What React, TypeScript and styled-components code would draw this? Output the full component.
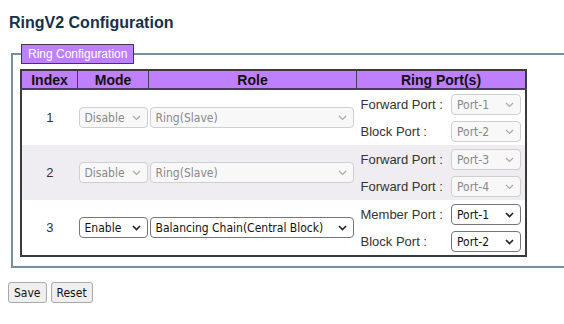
import styled, { createGlobalStyle } from "styled-components";

const GlobalStyle = createGlobalStyle`
  html {
    overflow: hidden;
  }
  body {
    margin: 0;
    background: #fff;
    font-family: "Liberation Sans", Arial, sans-serif;
    color: #222;
  }
`;

const Page = styled.div`
  padding: 13px 0 0 0;
`;

const Title = styled.h1`
  margin: 0 0 11px 9px;
  font-size: 16px;
  font-weight: bold;
  line-height: 20px;
  color: #17304a;
`;

const Fieldset = styled.fieldset`
  margin: 0 -40px 0 11px;
  padding: 5px 8px 9px 8px;
  border: 2px solid #7590a2;
`;

const Legend = styled.legend`
  padding: 0 6px;
  height: 18px;
  line-height: 18px;
  background: #bf80ff;
  border: 1px solid #3c3c4c;
  color: #fff;
  font-size: 12px;
`;

const Table = styled.table`
  margin-left: -1px;
  border-collapse: collapse;
  width: 500px;
  table-layout: fixed;
  border: 2px solid #3a3a3a;
`;

const HeadCell = styled.th<{ $w: number }>`
  width: ${({ $w }) => $w}px;
  height: 17px;
  padding: 0;
  background: #bf80ff;
  border: 1px solid #4a3d5c;
  border-bottom: 2px solid #4a3d5c;
  font-size: 14px;
  font-weight: bold;
  color: #111;
  text-align: center;
  line-height: 16px;
`;

const Row = styled.tr<{ $alt?: boolean }>`
  background: ${({ $alt }) => ($alt ? "#efedf2" : "#fff")};
`;

const Cell = styled.td<{ $center?: boolean }>`
  padding: 0 1px;
  height: 55px;
  vertical-align: middle;
  text-align: ${({ $center }) => ($center ? "center" : "left")};
  font-size: 13px;
  color: #333;
`;

const PortCell = styled.td`
  padding: 4px 4px 3px 4px;
  vertical-align: top;
`;

const PortLines = styled.div`
  display: flex;
  flex-direction: column;
  gap: 6px;
`;

const PortLine = styled.div`
  display: flex;
  align-items: center;
  justify-content: space-between;
  height: 21px;
`;

const PortLabel = styled.span`
  font-size: 13px;
  color: #333;
`;

const SelectBox = styled.span<{ $w: number }>`
  position: relative;
  display: inline-block;
  width: ${({ $w }) => $w}px;
  height: 21px;
  vertical-align: middle;

  svg {
    position: absolute;
    right: 7px;
    top: 8px;
    width: 9px;
    height: 6px;
    pointer-events: none;
  }
`;

const Select = styled.select`
  appearance: none;
  width: 100%;
  height: 21px;
  margin: 0;
  padding: 0 18px 0 5px;
  border: 1px solid #767676;
  border-radius: 4px;
  background: #fff;
  color: #111;
  font-family: "DejaVu Sans Condensed", "DejaVu Sans", sans-serif;
  font-stretch: condensed;
  font-size: 12px;

  &:disabled {
    border-color: #cfcfcf;
    background: #f8f8f8;
    color: #888;
    opacity: 1;
  }
`;

const Buttons = styled.div`
  display: flex;
  gap: 4px;
  margin: 14px 0 0 8px;
`;

const Button = styled.button`
  height: 21px;
  padding: 0 5px;
  border: 1px solid #a9a9a9;
  border-radius: 3px;
  background: #efefef;
  color: #111;
  font-family: "DejaVu Sans Condensed", "DejaVu Sans", sans-serif;
  font-stretch: condensed;
  font-size: 12px;
`;

function Dropdown({
  width,
  disabled,
  value,
  options,
}: {
  width: number;
  disabled: boolean;
  value: string;
  options: string[];
}) {
  return (
    <SelectBox $w={width}>
      <Select disabled={disabled} defaultValue={value}>
        {options.map((o) => (
          <option key={o}>{o}</option>
        ))}
      </Select>
      <svg viewBox="0 0 9 6" fill="none">
        <path
          d="M1 1L4.5 4.5L8 1"
          stroke={disabled ? "#a8a8a8" : "#222"}
          strokeWidth={disabled ? 1.2 : 1.6}
        />
      </svg>
    </SelectBox>
  );
}

type Port = { label: string; value: string };

type RingRow = {
  index: number;
  mode: string;
  role: string;
  ports: Port[];
  enabled: boolean;
};

const rows: RingRow[] = [
  {
    index: 1,
    mode: "Disable",
    role: "Ring(Slave)",
    ports: [
      { label: "Forward Port :", value: "Port-1" },
      { label: "Block Port :", value: "Port-2" },
    ],
    enabled: false,
  },
  {
    index: 2,
    mode: "Disable",
    role: "Ring(Slave)",
    ports: [
      { label: "Forward Port :", value: "Port-3" },
      { label: "Forward Port :", value: "Port-4" },
    ],
    enabled: false,
  },
  {
    index: 3,
    mode: "Enable",
    role: "Balancing Chain(Central Block)",
    ports: [
      { label: "Member Port :", value: "Port-1" },
      { label: "Block Port :", value: "Port-2" },
    ],
    enabled: true,
  },
];

const modes = ["Disable", "Enable"];
const roles = ["Ring(Master)", "Ring(Slave)", "Balancing Chain(Central Block)"];
const portNames = ["Port-1", "Port-2", "Port-3", "Port-4"];

export default function App() {
  return (
    <Page>
      <GlobalStyle />
      <Title>RingV2 Configuration</Title>
      <Fieldset>
        <Legend>Ring Configuration</Legend>
        <Table>
          <thead>
            <tr>
              <HeadCell $w={55}>Index</HeadCell>
              <HeadCell $w={70}>Mode</HeadCell>
              <HeadCell $w={207}>Role</HeadCell>
              <HeadCell $w={168}>Ring Port(s)</HeadCell>
            </tr>
          </thead>
          <tbody>
            {rows.map((r, i) => (
              <Row key={r.index} $alt={i % 2 === 1}>
                <Cell $center>{r.index}</Cell>
                <Cell>
                  <Dropdown width={69} disabled={!r.enabled} value={r.mode} options={modes} />
                </Cell>
                <Cell>
                  <Dropdown width={204} disabled={!r.enabled} value={r.role} options={roles} />
                </Cell>
                <PortCell>
                  <PortLines>
                    {r.ports.map((p, j) => (
                      <PortLine key={j}>
                        <PortLabel>{p.label}</PortLabel>
                        <Dropdown
                          width={70}
                          disabled={!r.enabled}
                          value={p.value}
                          options={portNames}
                        />
                      </PortLine>
                    ))}
                  </PortLines>
                </PortCell>
              </Row>
            ))}
          </tbody>
        </Table>
      </Fieldset>
      <Buttons>
        <Button>Save</Button>
        <Button>Reset</Button>
      </Buttons>
    </Page>
  );
}
